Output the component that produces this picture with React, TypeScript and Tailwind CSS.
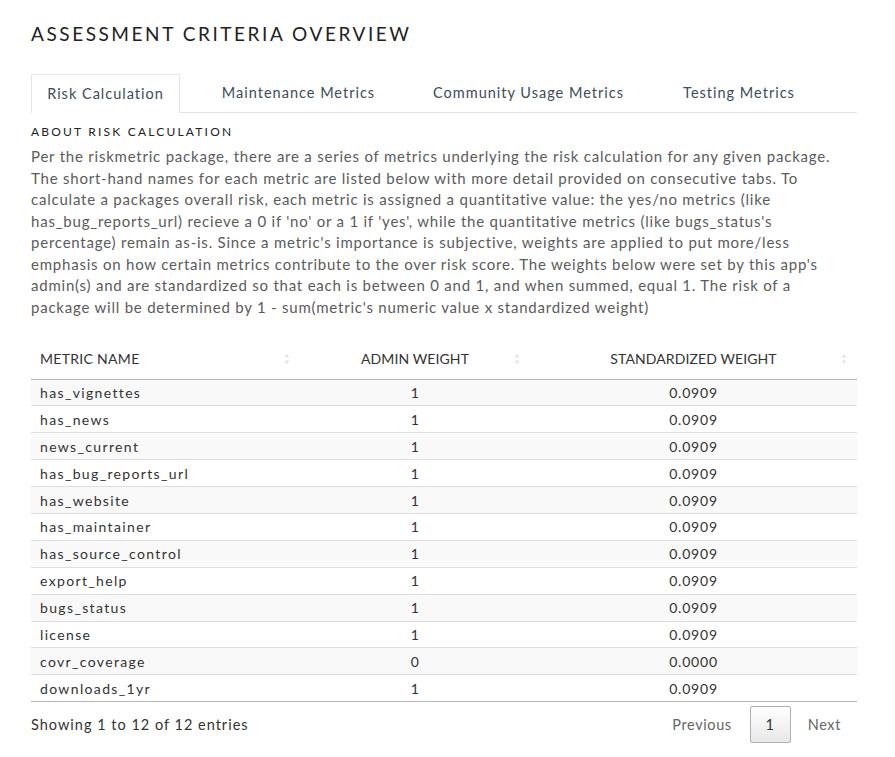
import React from "react";

const rows: [string, string, string][] = [
  ["has_vignettes", "1", "0.0909"],
  ["has_news", "1", "0.0909"],
  ["news_current", "1", "0.0909"],
  ["has_bug_reports_url", "1", "0.0909"],
  ["has_website", "1", "0.0909"],
  ["has_maintainer", "1", "0.0909"],
  ["has_source_control", "1", "0.0909"],
  ["export_help", "1", "0.0909"],
  ["bugs_status", "1", "0.0909"],
  ["license", "1", "0.0909"],
  ["covr_coverage", "0", "0.0000"],
  ["downloads_1yr", "1", "0.0909"],
];

const lines = [
  "Per the riskmetric package, there are a series of metrics underlying the risk calculation for any given package.",
  "The short-hand names for each metric are listed below with more detail provided on consecutive tabs. To",
  "calculate a packages overall risk, each metric is assigned a quantitative value: the yes/no metrics (like",
  "has_bug_reports_url) recieve a 0 if 'no' or a 1 if 'yes', while the quantitative metrics (like bugs_status's",
  "percentage) remain as-is. Since a metric's importance is subjective, weights are applied to put more/less",
  "emphasis on how certain metrics contribute to the over risk score. The weights below were set by this app's",
  "admin(s) and are standardized so that each is between 0 and 1, and when summed, equal 1. The risk of a",
  "package will be determined by 1 - sum(metric's numeric value x standardized weight)",
];

function SortIcon() {
  return (
    <svg width="6" height="12" viewBox="0 0 6 12" className="absolute right-[10px] top-1/2 -translate-y-1/2">
      <path d="M3 1 L5.5 4.5 H0.5 Z" fill="#e3e3e3" />
      <path d="M3 11 L5.5 7.5 H0.5 Z" fill="#e3e3e3" />
    </svg>
  );
}

export default function App() {
  return (
    <div
      className="bg-white w-[895px] min-h-[757px] text-[#333]"
      style={{ fontFamily: "Lato, 'Open Sans', sans-serif" }}
    >
      <div className="ml-[31px] w-[826px] pt-[22px]">
        <h1 className="text-[19px] leading-[24px] tracking-[2.55px] text-[#222] font-normal">
          ASSESSMENT CRITERIA OVERVIEW
        </h1>
        <div className="mt-[28px] flex border-b border-[#e5e5e5] h-[39px] text-[14.5px] tracking-[1px] text-[#3d4b5c]">
          <div className="w-[149px] border border-b-0 border-[#e5e5e5] bg-white flex items-center justify-center -mb-px h-[39px]">
            Risk Calculation
          </div>
          <div className="w-[237px] flex items-center justify-center">Maintenance Metrics</div>
          <div className="w-[223px] flex items-center justify-center">Community Usage Metrics</div>
          <div className="w-[198px] flex items-center justify-center">Testing Metrics</div>
        </div>
        <div className="mt-[11px] text-[12px] leading-[16px] tracking-[2.2px] text-[#222]">ABOUT RISK CALCULATION</div>
        <div className="mt-[6px] text-[15px] leading-[21.5px] tracking-[0.78px] text-[#5b5b5b]">
          {lines.map((l, i) => (
            <div key={i} className="whitespace-nowrap">{l}</div>
          ))}
        </div>
        <table className="mt-[21px] w-full border-collapse text-[14px] tracking-[0.4px]">
          <thead>
            <tr className="h-[40px] border-b border-[#b5b5b5] text-[#333]">
              <th className="relative w-[269px] text-left font-normal pl-[9px] tracking-[0.3px]">
                METRIC NAME
                <SortIcon />
              </th>
              <th className="relative w-[230px] text-center font-normal tracking-[0.1px]">
                ADMIN WEIGHT
                <SortIcon />
              </th>
              <th className="relative text-center font-normal tracking-[0.1px]">
                STANDARDIZED WEIGHT
                <SortIcon />
              </th>
            </tr>
          </thead>
          <tbody>
            {rows.map((r, i) => (
              <tr
                key={r[0]}
                className={`h-[26.9px] ${i < rows.length - 1 ? "border-b border-[#dedede]" : "border-b border-[#b5b5b5]"} ${i % 2 === 0 ? "bg-[#f9f9f9]" : "bg-white"}`}
              >
                <td className="pl-[9px] tracking-[1.35px]">{r[0]}</td>
                <td className="text-center">{r[1]}</td>
                <td className="text-center tracking-[0.8px]">{r[2]}</td>
              </tr>
            ))}
          </tbody>
        </table>
        <div className="flex items-center justify-between mt-[4px] text-[14.5px] tracking-[1px]">
          <div className="text-[#333]">Showing 1 to 12 of 12 entries</div>
          <div className="flex items-center mr-[16px]">
            <span className="text-[#666] mr-[18px] tracking-[0.6px]">Previous</span>
            <span className="w-[41px] h-[37px] flex items-center justify-center border border-[#b0b0b0] rounded-[2px] bg-gradient-to-b from-white to-[#e8e8e8] text-[#333]">
              1
            </span>
            <span className="text-[#666] ml-[17px] tracking-[0.6px]">Next</span>
          </div>
        </div>
      </div>
    </div>
  );
}
